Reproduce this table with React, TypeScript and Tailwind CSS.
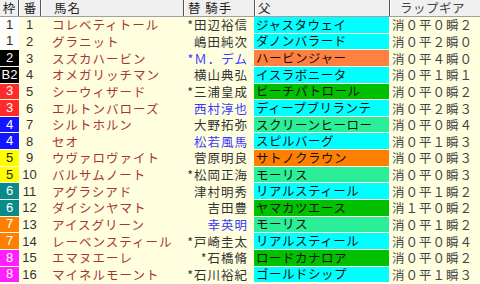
const FONT = '"Noto Sans CJK JP", "Noto Sans", sans-serif';

const FRAME: Record<string, string> = {
  '1': 'bg-white text-[#222]',
  '2': 'bg-black text-white',
  '3': 'bg-[#ff2b2b] text-white',
  '4': 'bg-[#1414ff] text-white',
  '5': 'bg-[#ffff00] text-[#222]',
  '6': 'bg-[#0a8a8a] text-white',
  '7': 'bg-[#ff8000] text-white',
  '8': 'bg-[#ff1fff] text-white',
};

const SIRE: Record<string, string> = {
  cyan: 'bg-[#00ffff]',
  orange: 'bg-[#ff8040]',
  orange2: 'bg-[#ff8000]',
  green: 'bg-[#00c000]',
  mint: 'bg-[#2bee98]',
};

type Row = {
  frame: string;
  label?: string;
  no: number;
  name: string;
  jockey: string;
  blue?: boolean;
  sire: string;
  sc: string;
  gear: string;
};

const rows: Row[] = [
  { frame: '1', no: 1, name: 'コレベティトール', jockey: '*田辺裕信', sire: 'ジャスタウェイ', sc: 'cyan', gear: '消０平０瞬２' },
  { frame: '1', no: 2, name: 'グラニット', jockey: '嶋田純次', sire: 'ダノンバラード', sc: 'cyan', gear: '消０平２瞬０' },
  { frame: '2', no: 3, name: 'スズカハービン', jockey: '*Ｍ．デム', blue: true, sire: 'ハービンジャー', sc: 'orange', gear: '消０平４瞬０' },
  { frame: '2', label: 'B2', no: 4, name: 'オメガリッチマン', jockey: '横山典弘', sire: 'イスラボニータ', sc: 'cyan', gear: '消０平１瞬１' },
  { frame: '3', no: 5, name: 'シーウィザード', jockey: '*三浦皇成', sire: 'ビーチパトロール', sc: 'green', gear: '消０平０瞬２' },
  { frame: '3', no: 6, name: 'エルトンバローズ', jockey: '西村淳也', blue: true, sire: 'ディープブリランテ', sc: 'cyan', gear: '消０平２瞬３' },
  { frame: '4', no: 7, name: 'シルトホルン', jockey: '大野拓弥', sire: 'スクリーンヒーロー', sc: 'mint', gear: '消０平０瞬４' },
  { frame: '4', no: 8, name: 'セオ', jockey: '松若風馬', blue: true, sire: 'スピルバーグ', sc: 'cyan', gear: '消０平１瞬３' },
  { frame: '5', no: 9, name: 'ウヴァロヴァイト', jockey: '菅原明良', sire: 'サトノクラウン', sc: 'orange2', gear: '消０平０瞬３' },
  { frame: '5', no: 10, name: 'バルサムノート', jockey: '*松岡正海', sire: 'モーリス', sc: 'mint', gear: '消０平０瞬３' },
  { frame: '6', no: 11, name: 'アグラシアド', jockey: '津村明秀', sire: 'リアルスティール', sc: 'cyan', gear: '消０平１瞬２' },
  { frame: '6', no: 12, name: 'ダイシンヤマト', jockey: '吉田豊', sire: 'ヤマカツエース', sc: 'green', gear: '消１平０瞬２' },
  { frame: '7', no: 13, name: 'アイスグリーン', jockey: '幸英明', blue: true, sire: 'モーリス', sc: 'mint', gear: '消０平１瞬２' },
  { frame: '7', no: 14, name: 'レーベンスティール', jockey: '*戸崎圭太', sire: 'リアルスティール', sc: 'cyan', gear: '消０平０瞬４' },
  { frame: '8', no: 15, name: 'エマヌエーレ', jockey: '*石橋脩', sire: 'ロードカナロア', sc: 'green', gear: '消０平０瞬２' },
  { frame: '8', no: 16, name: 'マイネルモーント', jockey: '*石川裕紀', sire: 'ゴールドシップ', sc: 'cyan', gear: '消０平１瞬３' },
];

function Sep() {
  return <div className="h-full w-[2px] shrink-0 border-l border-[#555] border-r border-r-white" />;
}

export default function App() {
  return (
    <div
      className="w-[480px] h-[284px] overflow-hidden bg-[#ffffe0] text-[12.5px] leading-[14px]"
      style={{ fontFamily: FONT }}
    >
      {/* Header */}
      <div className="flex h-[17px] items-center bg-[#f0f0f0] border-b border-[#a0a0a0] text-[#222]">
        <div className="w-[18px] text-center">枠</div>
        <Sep />
        <div className="w-[20px] text-center">番</div>
        <Sep />
        <div className="w-[141px] pl-[12px] tracking-[1px]">馬名</div>
        <Sep />
        <div className="w-[69px] pl-[3px] tracking-[1px]">替 騎手</div>
        <Sep />
        <div className="w-[133px] pl-[2px]">父</div>
        <Sep />
        <div className="flex-1 pl-[9px] text-[#444] tracking-[0.5px]">ラップギア</div>
      </div>

      {/* Body */}
      {rows.map((r) => (
        <div key={r.no} className="flex h-[16.65px]">
          <div
            className={`w-[19px] h-[15.6px] flex items-center justify-center text-[13px] ${FRAME[r.frame]}`}
            style={{ fontFamily: '"Liberation Sans", sans-serif' }}
          >
            {r.label ?? r.frame}
          </div>
          <div
            className="w-[21px] flex items-center justify-center text-[13px] text-[#333]"
            style={{ fontFamily: '"Liberation Sans", sans-serif' }}
          >
            {r.no}
          </div>
          <div className="w-[143px] flex items-center pl-[12px] whitespace-nowrap tracking-[1px] text-[#a83434]">
            {r.name}
          </div>
          <div
            className={`w-[71px] flex items-center justify-end pr-[6px] whitespace-nowrap tracking-[1px] ${
              r.blue ? 'text-[#3a3aff]' : 'text-[#333]'
            }`}
          >
            {r.jockey}
          </div>
          <div
            className={`w-[135px] h-[15.6px] flex items-center pl-[2px] overflow-hidden whitespace-nowrap text-[#111] tracking-[0.5px] ${SIRE[r.sc]}`}
          >
            {r.sire}
          </div>
          <div className="flex-1 flex items-center pl-[3px] whitespace-nowrap tracking-[1px] text-[#444]">
            {r.gear}
          </div>
        </div>
      ))}
    </div>
  );
}
